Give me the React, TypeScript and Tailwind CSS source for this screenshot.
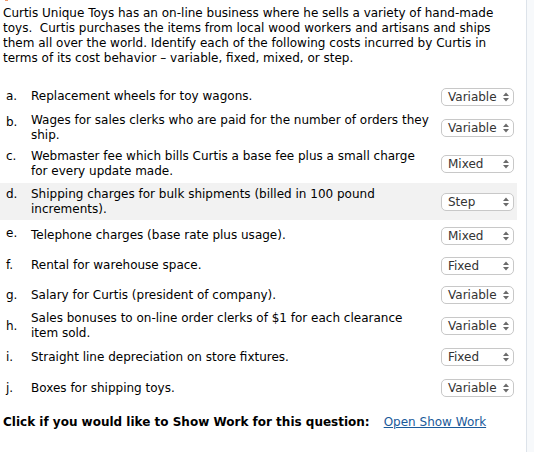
import React from "react";

type Row = { l: string; lines: string[]; v: string; h: number; hl?: boolean; la?: string };

const rows: Row[] = [
  { l: "a.", lines: ["Replacement wheels for toy wagons."], v: "Variable", h: 29 },
  { l: "b.", lines: ["Wages for sales clerks who are paid for the number of orders they", "ship."], v: "Variable", h: 34, la: "top" },
  { l: "c.", lines: ["Webmaster fee which bills Curtis a base fee plus a small charge", "for every update made."], v: "Mixed", h: 38, la: "top" },
  { l: "d.", lines: ["Shipping charges for bulk shipments (billed in 100 pound", "increments)."], v: "Step", h: 37, hl: true, la: "top" },
  { l: "e.", lines: ["Telephone charges (base rate plus usage)."], v: "Mixed", h: 31, la: "raised" },
  { l: "f.", lines: ["Rental for warehouse space."], v: "Fixed", h: 29 },
  { l: "g.", lines: ["Salary for Curtis (president of company)."], v: "Variable", h: 30 },
  { l: "h.", lines: ["Sales bonuses to on-line order clerks of $1 for each clearance", "item sold."], v: "Variable", h: 32 },
  { l: "i.", lines: ["Straight line depreciation on store fixtures."], v: "Fixed", h: 30 },
  { l: "j.", lines: ["Boxes for shipping toys."], v: "Variable", h: 32 },
];

function Sel({ v }: { v: string }) {
  return (
    <div className="flex h-[18px] w-[73px] items-center justify-between rounded-[5px] border border-[#c8c8c8] bg-white pl-[6px] pr-[4px] text-[12px] leading-[16px] text-[#333]">
      <span>{v}</span>
      <svg width="6" height="10" viewBox="0 0 6 10">
        <path d="M0 4 L3 0.5 L6 4 Z" fill="#6b6b6b" />
        <path d="M0 6 L3 9.5 L6 6 Z" fill="#6b6b6b" />
      </svg>
    </div>
  );
}

export default function App() {
  return (
    <div
      className="flex h-[452px] w-[534px] overflow-hidden bg-white text-black"
      style={{ fontFamily: '"DejaVu Sans", Verdana, sans-serif' }}
    >
      <div className="relative w-[527px] shrink-0 border-r border-[#dde3ea]">
        <div className="absolute left-[5px] top-0 h-[1px] w-[3px] bg-[#f39a6b]" />
        <p className="pl-[3px] pt-[6px] text-[12px] leading-[15px]">
          Curtis Unique Toys has an on-line business where he sells a variety of hand-made
          <br />
          toys.&nbsp; Curtis purchases the items from local wood workers and artisans and ships
          <br />
          them all over the world. Identify each of the following costs incurred by Curtis in
          <br />
          terms of its cost behavior – variable, fixed, mixed, or step.
        </p>
        <div className="mt-[16px] w-[517px]">
          {rows.map((r) => (
            <div
              key={r.l}
              className={`flex items-center text-[12px] leading-[15px] ${r.hl ? "bg-[#f2f2f2]" : ""}`}
              style={{ height: r.h }}
            >
              <div
                className={`w-[31px] shrink-0 pl-[6px] ${r.la === "raised" ? "-mt-[5px]" : ""} ${r.la === "top" ? "self-start pt-[4px]" : ""}`}
              >
                {r.l}
              </div>
              <div className="w-[405px] shrink-0">
                {r.lines.map((t, i) => (
                  <div key={i}>{t}</div>
                ))}
              </div>
              <div className="ml-auto pr-[3px]">
                <Sel v={r.v} />
              </div>
            </div>
          ))}
        </div>
        <div className="mt-[11px] flex pl-[3px] text-[12px] leading-[15px]">
          <span className="font-bold">Click if you would like to Show Work for this question:</span>
          <span className="ml-[14px] text-[#1a5a9a] underline">Open Show Work</span>
        </div>
      </div>
      <div className="flex-1 bg-[#f7f9fb]" />
    </div>
  );
}
